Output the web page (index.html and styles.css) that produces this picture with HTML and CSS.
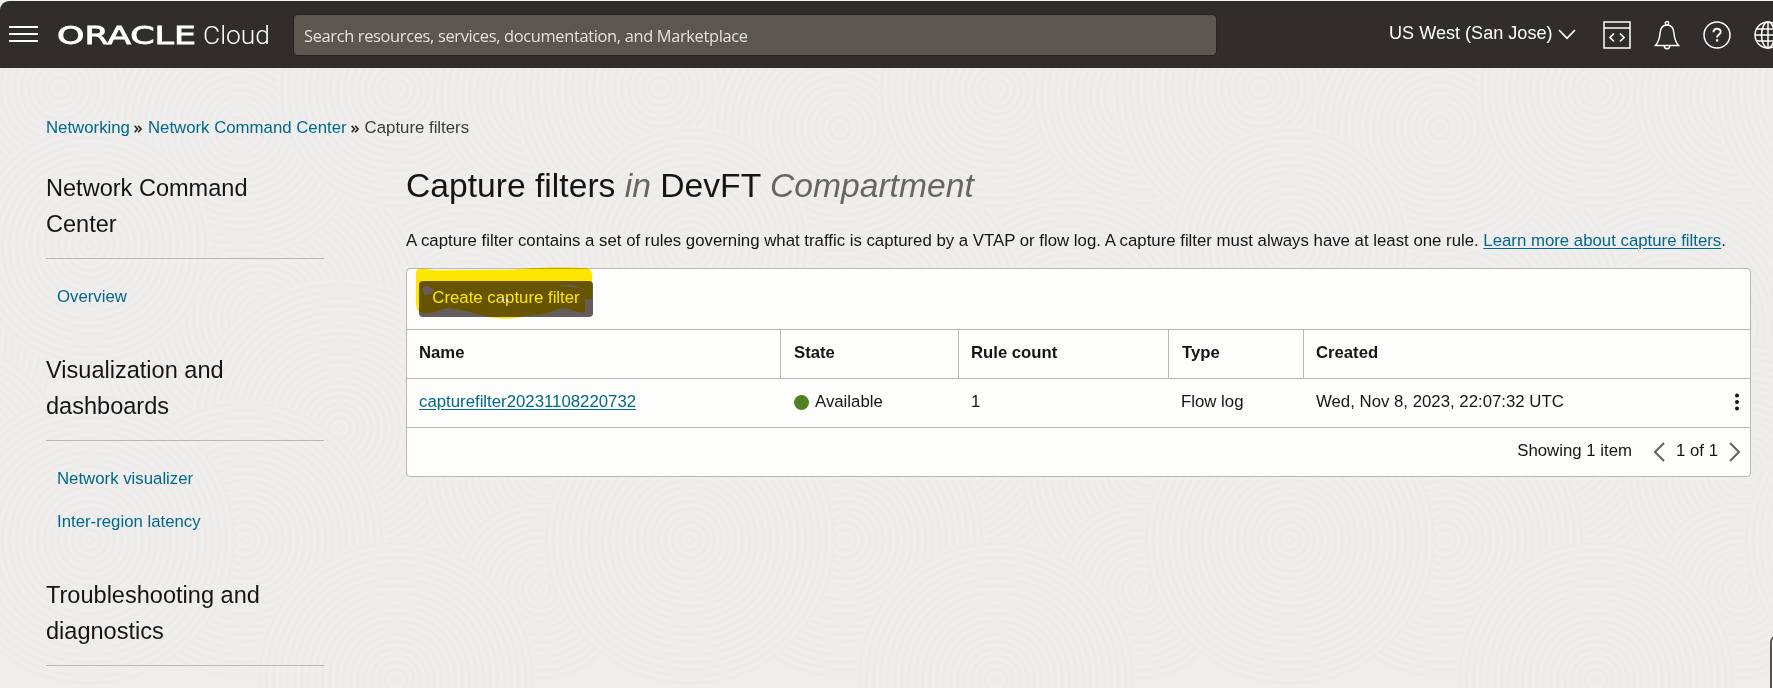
FILE: index.html
```html
<!DOCTYPE html>
<html lang="en">
<head>
<meta charset="utf-8">
<title>Capture filters</title>
<link rel="stylesheet" href="styles.css">
</head>
<body>
<svg class="texture" width="1773" height="620" aria-hidden="true">
  <defs>
    <radialGradient id="ring" gradientUnits="userSpaceOnUse" cx="0" cy="0" r="7" spreadMethod="repeat">
      <stop offset="0" stop-color="#f0efed"/><stop offset=".5" stop-color="#ecebe9"/><stop offset="1" stop-color="#f0efed"/>
    </radialGradient>
    <g id="tile" fill="url(#ring)">
      <circle r="190" transform="translate(470 260)"/>
      <circle r="170" transform="translate(260 250)"/>
      <circle r="150" transform="translate(60 20)"/>
      <circle r="130" transform="translate(240 60)"/>
      <circle r="120" transform="translate(397 22)"/>
      <circle r="110" transform="translate(543 27)"/>
      <circle r="150" transform="translate(340 360)"/>
      <circle r="120" transform="translate(90 178)"/>
      <circle r="125" transform="translate(545 400)"/>
      <circle r="90" transform="translate(540 522)"/>
      <circle r="140" transform="translate(245 472)"/>
      <circle r="145" transform="translate(90 472)"/>
      <circle r="140" transform="translate(396 612)"/>
    </g>
  </defs>
  <use href="#tile" x="-600"/><use href="#tile"/><use href="#tile" x="600"/><use href="#tile" x="1200"/><use href="#tile" x="1800"/>
</svg>

<header class="topbar">
  <svg class="menu" width="29" height="17" viewBox="0 0 29 17"><path d="M0 1h29M0 8h29M0 15h29" stroke="#fff" stroke-width="2"/></svg>
  <svg class="logo" width="214" height="30" viewBox="0 0 214 30">
    <text class="logo-oracle" x="-1" y="23.5" textLength="139" lengthAdjust="spacingAndGlyphs">ORACLE</text>
    <text class="logo-cloud" x="145" y="23.5" textLength="67" lengthAdjust="spacingAndGlyphs">Cloud</text>
  </svg>
  <div class="search">Search resources, services, documentation, and Marketplace</div>
  <div class="region"><span>US West (San Jose)</span>
    <svg width="18" height="11" viewBox="0 0 18 11" fill="none" stroke="#fff" stroke-width="1.8"><path d="M1 1l8 8.3L17 1"/></svg>
  </div>
  <div class="tools">
    <svg width="28" height="28" viewBox="0 0 28 28" fill="none" stroke="#fff" stroke-width="1.5"><path d="M1 1h26v26H1zM1 7h26"/><path d="M11 12.5l-4 4 4 4M17 12.5l4 4-4 4" stroke-width="1.7"/></svg>
    <svg width="26" height="30" viewBox="0 0 26 30" fill="none" stroke="#fff" stroke-width="1.5"><path d="M1.5 25.5h23c-3-3.500-4-6-4.500-12-.3-5-2.500-8.500-7-8.500s-6.700 3.500-7 8.500c-.5 6-1.500 8.500-4.500 12z"/><circle cx="13" cy="3.300" r="1.700"/><path d="M10.300 26c0 3.600 5.400 3.600 5.400 0"/></svg>
    <svg width="28" height="28" viewBox="0 0 28 28" fill="none" stroke="#fff" stroke-width="1.500"><circle cx="14" cy="14" r="13"/><path d="M10.500 11.300c0-4.600 7.200-4.600 7.200-.4 0 2.600-3.600 2.700-3.600 5.600" stroke-width="1.900"/><path d="M14.100 18.300v2.200" stroke-width="2.200"/></svg>
    <svg width="28" height="28" viewBox="0 0 28 28" fill="none" stroke="#fff" stroke-width="1.500"><circle cx="14" cy="14" r="13"/><ellipse cx="14" cy="14" rx="6.500" ry="13"/><path d="M14 1v26M1 14h26M3 8h22M3 20h22"/></svg>
  </div>
</header>

<nav class="crumbs">
  <a>Networking</a><svg width="8" height="8" viewBox="0 0 8 8"><path d="M.7.7L3.500 4 .7 7.300M4.200.7L7 4 4.200 7.300"/></svg><a>Network Command Center</a><svg width="8" height="8" viewBox="0 0 8 8"><path d="M.7.7L3.500 4 .7 7.300M4.200.7L7 4 4.200 7.300"/></svg><span>Capture filters</span>
</nav>

<div class="layout">
  <aside class="side">
    <h2>Network Command<br>Center</h2>
    <ul><li>Overview</li></ul>
    <h2>Visualization and<br>dashboards</h2>
    <ul><li>Network visualizer</li><li>Inter-region latency</li></ul>
    <h2>Troubleshooting and<br>diagnostics</h2>
  </aside>
  <main class="main">
    <h1>Capture filters <em>in</em> DevFT <em>Compartment</em></h1>
    <p class="intro">A capture filter contains a set of rules governing what traffic is captured by a VTAP or flow log. A capture filter must always have at least one rule. <a>Learn more about capture filters</a>.</p>
    <section class="panel">
      <div class="actions">
        <button class="create">Create capture filter</button>
        <svg class="marker" width="180" height="54" viewBox="415 266 180 54"><path fill-rule="evenodd" fill="#ffe800" d="M416 273q0-4.500 5-4.500c5 0 8 2 20 1.700l68-.5c18-1 35-2.700 58-2.200l18 .5q7 0 7 8v23h-7v14l-12-2c-8-5-14-2-22 1-10 3.500-20 3-30 5-10 2.500-24 2-34-.5-15-4-26-7-38-8.500-6 0-9 3-16 4.500-8 1.500-12 1-15-2-3-3-2-16-2-38zM423 288q3-4 7-1l5 3-4 4-7 1zM560 285h13l11 4v1l-6-2.500-18-1.500zM494 300l7-1.500 12 1-4 2z"/></svg>
      </div>
      <div class="row head"><div>Name</div><div class="wide">State</div><div>Rule count</div><div class="wide">Type</div><div>Created</div></div>
      <div class="row values">
        <div><a>capturefilter20231108220732</a></div><div class="state"><i class="dot"></i>Available</div><div>1</div><div>Flow log</div>
        <div class="created"><span>Wed, Nov 8, 2023, 22:07:32 UTC</span><svg width="6" height="18" viewBox="0 0 6 18" fill="#161513"><circle cx="3" cy="2.500" r="2"/><circle cx="3" cy="9" r="2"/><circle cx="3" cy="15.500" r="2"/></svg></div>
      </div>
      <div class="pager"><span class="showing">Showing 1 item</span>
        <svg width="12" height="20" viewBox="0 0 12 20"><path d="M11 1L2 10l9 9"/></svg><span class="pages">1 of 1</span><svg width="12" height="20" viewBox="0 0 12 20"><path d="M1 1l9 9-9 9"/></svg>
      </div>
    </section>
  </main>
</div>
<div class="helper"></div>
</body>
</html>
```
FILE: styles.css
```css
* { box-sizing: border-box; }
html { background: #f0f4f4; }
body {
  margin: 0; width: 1773px; height: 688px; overflow: hidden; position: relative;
  font: 16.8px/20px "Liberation Sans", Arial, sans-serif; color: #161513;
  display: flow-root;
}
.texture { position: absolute; left: 0; top: 68px; z-index: -1; background: #efeeec; }
a, li { color: #00688c; }
svg { flex: none; }

.topbar {
  margin-top: 1px; height: 67px; background: #312d2a; border-top-left-radius: 9px;
  display: flex; align-items: center; padding-left: 9px; color: #fff; overflow: hidden;
}
.menu { margin-right: 20px; }
.logo { margin-right: 22px; fill: #fff; }
.logo-oracle { font: 24.5px "DejaVu Sans", sans-serif; stroke: #fff; stroke-width: .8; }
.logo-cloud { font: 300 26.5px Roboto, sans-serif; }
.search {
  width: 922px; height: 40px; flex: none; padding: 0 10px; border-radius: 4px; background: #5b564f;
  box-shadow: 0 0 0 1px #262220; font: 16.4px/41px "Open Sans", sans-serif; letter-spacing: -.33px; color: #e4e1dd;
}
.region { margin-left: 173px; display: flex; gap: 5px; align-items: center; font-size: 18.1px; white-space: nowrap; }
.region span { margin-top: -3px; }
.tools { display: flex; align-items: center; margin-left: 27px; gap: 23px; }

.crumbs { display: flex; align-items: center; margin: 50px 0 0 46px; height: 20px; white-space: nowrap; }
.crumbs svg { margin: 2px 6px 0 4px; fill: none; stroke: #312d2a; stroke-width: 1.7; }
.crumbs span { color: #3f3a36; }

.layout { display: flex; margin-top: 32px; padding-left: 46px; }
.side { width: 278px; margin-right: 82px; flex: none; }
h1, h2 { font-weight: 400; margin: 0; white-space: nowrap; }
h2 { font-size: 23.55px; line-height: 36px; padding-bottom: 16px; border-bottom: 1px solid #bcb6b1; }
ul { list-style: none; margin: 0; padding: 16px 0 33px 11px; }
li { line-height: 44px; }
li + li { margin-top: -1px; }
.main { width: 1345px; flex: none; }
h1 { font-size: 33.65px; line-height: 40px; margin-top: -4px; }
h1 em { color: #6b6560; }
.intro { margin: 25px 0 17px; white-space: nowrap; line-height: 20px; }
.intro a, .row a { text-decoration: underline; text-underline-offset: 2px; }
.panel { border: 1px solid #bcb6b1; border-radius: 4px; background: #fdfdfb; height: 209px; }
.actions { position: relative; height: 60px; padding: 12px; }
.create { display: block; width: 174px; height: 36px; border: 0; padding: 0 0 2px; border-radius: 4px; background: #665c5b; color: #fff; font: 16.8px "Liberation Sans", sans-serif; white-space: nowrap; }
.marker { position: absolute; left: 8px; top: -3px; mix-blend-mode: multiply; }
.row { display: grid; grid-template-columns: 373px 178px 210px 135px 1fr; border-top: 1px solid #bcb6b1; height: 49px; line-height: 46px; white-space: nowrap; }
.row > div { padding-left: 12px; }
.head { font-weight: 700; font-size: 16.7px; }
.head > div + div { border-left: 1px solid #bcb6b1; }
.row > .wide { padding-left: 13px; }
.values > div + div { padding-left: 13px; }
.row > .state { display: flex; align-items: center; padding-left: 14px; }
.dot { width: 15px; height: 15px; border-radius: 50%; background: #508223; margin-right: 6px; }
.created { display: flex; align-items: center; justify-content: space-between; padding-right: 10px; }
.state, .created { height: 46px; }
.pager { display: flex; align-items: center; justify-content: flex-end; border-top: 1px solid #bcb6b1; height: 49px; padding-right: 9px; }
.pager svg { fill: none; stroke: #665f5b; stroke-width: 2; }
.pager span { padding-bottom: 2px; }
.showing { margin-right: 21px; }
.pages { margin: 0 11px; }
.helper { position: absolute; left: 1770px; top: 636px; width: 20px; height: 70px; border: 2px solid #55514e; border-radius: 6px; background: #fff; }
```
